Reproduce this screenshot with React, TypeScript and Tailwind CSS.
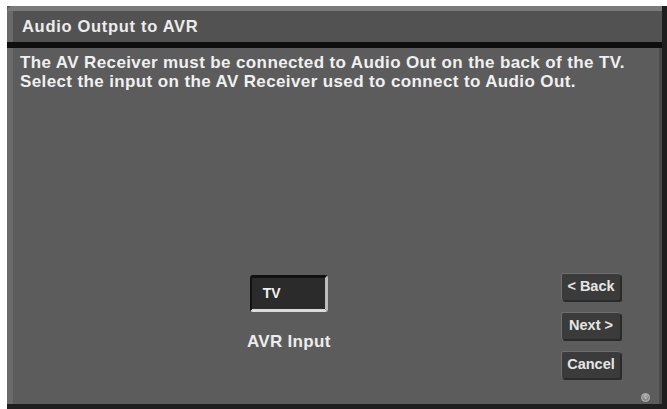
import React from "react";

const font = { fontFamily: '"Liberation Sans", Arial, sans-serif' };

const NavButton = ({ label }: { label: string }) => (
  <div className="flex h-[27px] w-[59px] items-center justify-center rounded-[2px] border-t border-l border-[#6e6e6e] bg-[#3b3b3b] text-[14.5px] font-bold text-[#e6e6e6] shadow-[2px_2px_0_#2a2a2a]">
    {label}
  </div>
);

export default function App() {
  return (
    <div className="h-[409px] w-[667px] bg-white pl-[7px] pt-[6px]" style={font}>
      <div className="flex h-[403px] w-[660px] flex-col border-r-[5px] border-b-[5px] border-[#1e1e1e] bg-[#5c5c5c]">
        {/* title bar */}
        <div className="flex h-[36px] flex-col rounded-tl-[6px] border-t-[5px] border-[#7a7a7a] bg-[#525252]">
          <div className="flex flex-1 items-center border-l-[6px] border-[#6a6a6a] pl-[9px] text-[16.5px] font-bold tracking-[0.7px] text-[#ececec]">
            Audio Output to AVR
          </div>
        </div>
        <div className="h-[6px] bg-[#0e0e0e]" />
        {/* body */}
        <div className="flex flex-1 border-l-[6px] border-[#6a6a6a]">
          <div className="flex flex-1 flex-col border-r-[3px] border-[#4a4a4a] pl-[7px] pr-[6px]">
            <p className="pt-[5px] text-[17px] font-bold leading-[19px] tracking-[0.38px] text-[#f0f0f0]">
              The AV Receiver must be connected to Audio Out on the back of the TV.
              <br />
              Select the input on the AV Receiver used to connect to Audio Out.
            </p>
            <div className="mt-auto flex items-end justify-between pb-[26px]">
              <div className="ml-[227px] mb-[24px] flex flex-col items-center gap-[17px]">
                <div className="flex h-[37px] w-[78px] items-center rounded-[3px] border-t-[3px] border-l-[2px] border-b-[3px] border-r-[3px] border-t-[#111] border-l-[#111] border-b-[#dcdcdc] border-r-[#bdbdbd] bg-[#2b2b2b] pl-[11px] text-[14px] font-bold text-[#f0f0f0]">
                  TV
                </div>
                <div className="text-[17px] font-bold tracking-[0.3px] text-[#ececec]">AVR Input</div>
              </div>
              <div className="mr-[33px] flex flex-col gap-[12px]">
                <NavButton label="< Back" />
                <NavButton label="Next >" />
                <NavButton label="Cancel" />
              </div>
            </div>
          </div>
        </div>
      </div>
      <div className="pointer-events-none relative">
        <div className="absolute left-[634px] top-[-16px] flex h-[9px] w-[9px] items-center justify-center rounded-full border border-[#bbb] bg-[#888] text-[5px] text-white">
          ©
        </div>
      </div>
    </div>
  );
}
